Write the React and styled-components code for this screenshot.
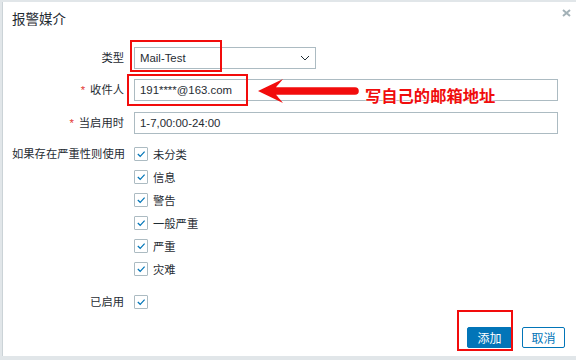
import React from 'react';
import styled, { createGlobalStyle } from 'styled-components';

const GlobalStyle = createGlobalStyle`
    html, body {
        margin: 0;
        padding: 0;
        background: #e1e6e9;
        overflow: hidden;
    }
    * {
        box-sizing: border-box;
    }
`;

const severities = ['未分类', '信息', '警告', '一般严重', '严重', '灾难'];

const FONT = `"Liberation Sans", "Noto Sans CJK SC", sans-serif`;

const Page = styled.div`
    width: 576px;
    height: 360px;
    padding: 2px 0 0 2px;
    font-family: ${FONT};
    color: #1f2c33;
`;

const Dialog = styled.div`
    position: relative;
    width: 574px;
    height: 354px;
    background: #fff;
    border-left: 1px solid #cbd3d7;
    padding: 9px 11px 0 9px;
    display: flex;
    flex-direction: column;
`;

const Title = styled.h3`
    margin: 0;
    font-size: 13.5px;
    line-height: 18px;
    font-weight: normal;
    color: #1f2c33;
`;

const Close = styled.button`
    position: absolute;
    top: 6px;
    right: 5px;
    width: 10px;
    height: 10px;
    padding: 0;
    border: 0;
    background: none;
    display: flex;
    align-items: center;
    justify-content: center;
`;

const Form = styled.div`
    margin-top: 18px;
    display: flex;
    flex-direction: column;
`;

const Row = styled.div`
    display: grid;
    grid-template-columns: 112px 1fr;
    column-gap: 10px;
    align-items: ${(p) => (p.$top ? 'start' : 'center')};
    margin-top: ${(p) => p.$mt || 0}px;
`;

const Label = styled.label`
    text-align: right;
    font-size: 11.3px;
    line-height: 14px;
    white-space: nowrap;
    color: #1f2c33;
`;

const Star = styled.span`
    color: #e33734;
    margin-right: 5px;
`;

const Field = styled.div`
    position: relative;
    width: ${(p) => p.$w}px;
`;

const Box = styled.div`
    height: 22px;
    border: 1px solid #acbbc2;
    background: #fff;
    display: flex;
    align-items: center;
    justify-content: space-between;
    padding: 0 5px;
    font-size: 11.4px;
    color: #1f2c33;
`;

const Highlight = styled.div`
    position: absolute;
    left: ${(p) => p.$l}px;
    top: ${(p) => p.$t}px;
    width: ${(p) => p.$w}px;
    height: ${(p) => p.$h}px;
    border: 2px solid #f20c0c;
    pointer-events: none;
`;

const Note = styled.div`
    position: absolute;
    left: 124px;
    top: -1px;
    display: flex;
    align-items: flex-start;
`;

const NoteText = styled.span`
    margin-left: 5px;
    margin-top: 9px;
    font-size: 16.3px;
    line-height: 18px;
    font-weight: bold;
    color: #f00c0c;
    white-space: nowrap;
    text-shadow: 0 0 2px #fff, 0 0 2px #fff;
`;

const CheckList = styled.div`
    display: flex;
    flex-direction: column;
    gap: 9px;
`;

const CheckItem = styled.div`
    display: flex;
    align-items: center;
    gap: 5px;
    height: 14px;
    font-size: 11.3px;
    color: #1f2c33;
`;

const CheckBox = styled.span`
    width: 14px;
    height: 14px;
    border: 1px solid #acbbc2;
    border-radius: 1px;
    display: flex;
    align-items: center;
    justify-content: center;
    flex: none;
`;

const Footer = styled.div`
    margin-top: auto;
    padding-bottom: 8px;
    display: flex;
    justify-content: flex-end;
    gap: 10px;
`;

const ButtonWrap = styled.div`
    position: relative;
`;

const Button = styled.button`
    height: 21px;
    width: ${(p) => p.$w}px;
    padding: 0;
    font-family: ${FONT};
    font-size: 12px;
    border: 1px solid #0275b8;
    border-radius: 2px;
    background: ${(p) => (p.$primary ? '#0275b8' : '#fff')};
    color: ${(p) => (p.$primary ? '#fff' : '#0275b8')};
`;

const Check = () => (
    <CheckBox>
        <svg width="10" height="8" viewBox="0 0 10 8">
            <polyline points="1.8,4 4.2,6.3 8.6,1.6" fill="none" stroke="#0275b8" strokeWidth="1.2" />
        </svg>
    </CheckBox>
);

const Arrow = () => (
    <svg width="102" height="26" viewBox="0 0 102 26">
        <path
            d="M0 13 L25 1 Q20 7 18 9.2 L97 9.2 A3.8 3.8 0 0 1 97 16.8 L18 16.8 Q20 19 25 25 Z"
            fill="#f20c0c"
        />
    </svg>
);

const App = () => {
    return (
        <Page>
            <GlobalStyle />
            <Dialog>
                <Title>报警媒介</Title>
                <Close aria-label="close">
                    <svg width="9" height="8" viewBox="0 0 9 8">
                        <path d="M1 1 L8 7 M8 1 L1 7" stroke="#a3b1b7" strokeWidth="2" />
                    </svg>
                </Close>
                <Form>
                    <Row>
                        <Label>类型</Label>
                        <Field $w={182}>
                            <Box>
                                Mail-Test
                                <svg width="10" height="6" viewBox="0 0 10 6">
                                    <polyline points="1,1 5,5 9,1" fill="none" stroke="#1f2c33" strokeWidth="1" />
                                </svg>
                            </Box>
                            <Highlight $l={-4} $t={-7} $w={92} $h={32} />
                        </Field>
                    </Row>
                    <Row $mt={10}>
                        <Label><Star>*</Star>收件人</Label>
                        <Field $w={424}>
                            <Box>191****@163.com</Box>
                            <Highlight $l={-7} $t={-5} $w={121} $h={32} />
                            <Note>
                                <Arrow />
                                <NoteText>写自己的邮箱地址</NoteText>
                            </Note>
                        </Field>
                    </Row>
                    <Row $mt={11}>
                        <Label><Star>*</Star>当启用时</Label>
                        <Field $w={424}>
                            <Box>1-7,00:00-24:00</Box>
                        </Field>
                    </Row>
                    <Row $mt={13} $top>
                        <Label>如果存在严重性则使用</Label>
                        <CheckList>
                            {severities.map((s) => (
                                <CheckItem key={s}>
                                    <Check />
                                    {s}
                                </CheckItem>
                            ))}
                        </CheckList>
                    </Row>
                    <Row $mt={19}>
                        <Label>已启用</Label>
                        <CheckItem>
                            <Check />
                        </CheckItem>
                    </Row>
                </Form>
                <Footer>
                    <ButtonWrap>
                        <Button $primary $w={45}>添加</Button>
                        <Highlight $l={-10} $t={-17} $w={56} $h={41} />
                    </ButtonWrap>
                    <Button $w={43}>取消</Button>
                </Footer>
            </Dialog>
        </Page>
    );
};

export default App;
